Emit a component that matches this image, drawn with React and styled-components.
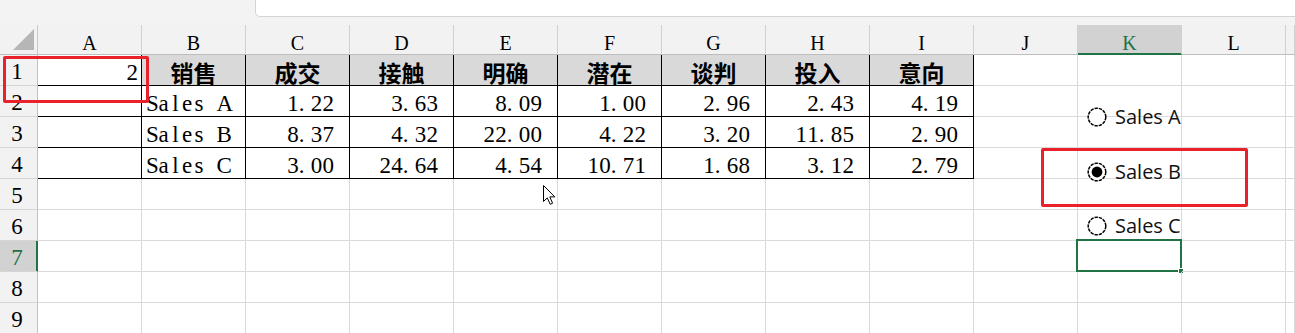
import React from 'react';
import styled, { createGlobalStyle } from 'styled-components';

const GlobalStyle = createGlobalStyle`
  html, body { margin: 0; padding: 0; background: #fff; }
  body { overflow: hidden; }
`;

const GREEN = '#217346';
const COLUMNS = ['A', 'B', 'C', 'D', 'E', 'F', 'G', 'H', 'I', 'J', 'K', 'L', ''];
const FIELDS = ['销售', '成交', '接触', '明确', '潜在', '谈判', '投入', '意向'];
const SALES = [
  ['Sales A', '1.22', '3.63', '8.09', '1.00', '2.96', '2.43', '4.19'],
  ['Sales B', '8.37', '4.32', '22.00', '4.22', '3.20', '11.85', '2.90'],
  ['Sales C', '3.00', '24.64', '4.54', '10.71', '1.68', '3.12', '2.79'],
];
const OPTIONS = ['Sales A', 'Sales B', 'Sales C'];
const PICKED = 2;
const ACTIVE = { row: 7, col: 10 };

const Workbook = styled.div`
  position: relative;
  width: 1295px;
  height: 333px;
  overflow: hidden;
  background: #fff;
  color: #000;
  font-family: "Liberation Serif", "Times New Roman", serif;
`;

const FormulaStrip = styled.div`
  height: 25px;
  box-sizing: border-box;
  padding-left: 255px;
  background: #f3f3f3;
`;

const FormulaBox = styled.div`
  height: 17px;
  box-sizing: border-box;
  background: #fff;
  border-left: 1px solid #d4d4d4;
  border-bottom: 1px solid #d4d4d4;
  border-bottom-left-radius: 5px;
`;

const Grid = styled.div`
  display: grid;
  grid-template-columns: 38px repeat(12, 104px) 1fr;
  grid-template-rows: 30px repeat(9, 31px);
`;

const HeaderBase = styled.div`
  box-sizing: border-box;
  display: flex;
  align-items: flex-end;
  justify-content: center;
  white-space: nowrap;
  background: ${(p) => (p.$selected ? '#d2d2d2' : '#f2f2f2')};
  color: ${(p) => (p.$selected ? GREEN : '#000')};
`;

const Corner = styled(HeaderBase)`
  position: relative;
  border-right: 1px solid #c8c8c8;
  border-bottom: 1px solid #bdbdbd;

  &::after {
    content: '';
    position: absolute;
    right: 3px;
    bottom: 4px;
    width: 0;
    height: 0;
    border-left: 21px solid transparent;
    border-bottom: 21px solid #b6b6b6;
  }
`;

const ColHead = styled(HeaderBase)`
  border-right: 1px solid #d0d0d0;
  border-bottom: 1px solid ${(p) => (p.$selected ? GREEN : '#bdbdbd')};
  box-shadow: ${(p) => (p.$selected ? `inset 0 -1px 0 ${GREEN}` : 'none')};
  font-size: 20px;
  line-height: 22px;
`;

const RowHead = styled(HeaderBase)`
  border-right: 1px solid ${(p) => (p.$selected ? GREEN : '#bfbfbf')};
  border-bottom: 1px solid #d5d5d5;
  box-shadow: ${(p) => (p.$selected ? `inset -1px 0 0 ${GREEN}` : 'none')};
  padding: 0 3px 1px 0;
  font-size: 23px;
  line-height: 24px;
`;

const Cell = styled.div`
  position: relative;
  box-sizing: border-box;
  display: flex;
  align-items: flex-end;
  white-space: nowrap;
  border-right: 1px solid ${(p) => (p.$ruleRight ? '#000' : '#dadada')};
  border-bottom: 1px solid ${(p) => (p.$ruleBottom ? '#000' : '#dadada')};
  font-size: 23px;
  line-height: 24px;
`;

const LabelCell = styled(Cell)`
  justify-content: flex-start;
  padding-left: 4px;
`;

const NumberCell = styled(Cell)`
  justify-content: flex-end;
  padding-right: ${(p) => p.$inset}px;
`;

const FieldCell = styled(Cell)`
  justify-content: center;
  padding-bottom: 1px;
  background: #d9d9d9;
  font-family: "Noto Sans CJK SC", sans-serif;
  font-weight: 700;
  font-size: 23px;
  line-height: 24px;
`;

const ActiveCell = styled(Cell)`
  &::before {
    content: '';
    position: absolute;
    top: -2px;
    left: -2px;
    right: -1px;
    bottom: -1px;
    border: 2px solid ${GREEN};
  }

  &::after {
    content: '';
    position: absolute;
    right: -3px;
    bottom: -3px;
    width: 4px;
    height: 4px;
    background: ${GREEN};
    border: 1px solid #fff;
  }
`;

/* half-width character cells, so Latin text and numbers set like the sheet's CJK font */
const Glyph = styled.span`
  display: inline-block;
  width: 11.75px;
  text-align: ${(p) => (p.$dot ? 'left' : 'center')};
`;

function HalfWidth({ text }) {
  return [...text].map((ch, i) => (
    <Glyph key={i} $dot={ch === '.'}>
      {ch === ' ' ? '\u00a0' : ch}
    </Glyph>
  ));
}

const OptionGroup = styled.div`
  position: absolute;
  left: 1087px;
  top: 107px;
  display: flex;
  flex-direction: column;
  gap: 34.5px;
`;

const Option = styled.div`
  display: flex;
  align-items: center;
  gap: 8px;
  height: 20px;
  font-family: "Open Sans", "Liberation Sans", sans-serif;
  font-size: 20px;
  line-height: 20px;
  color: #111;
`;

const RadioMark = styled.svg`
  flex: none;
  width: 20px;
  height: 20px;
`;

function Radio({ checked }) {
  return (
    <RadioMark viewBox="0 0 20 20">
      <circle cx="10" cy="10" r="8.8" fill="#fff" stroke="#000" strokeWidth="1.5" strokeDasharray="3.4 0.9" />
      {checked && <circle cx="10" cy="10" r="5.4" fill="#000" />}
    </RadioMark>
  );
}

const Callout = styled.div`
  position: absolute;
  left: ${(p) => p.$x}px;
  top: ${(p) => p.$y}px;
  width: ${(p) => p.$w}px;
  height: ${(p) => p.$h}px;
  box-sizing: border-box;
  border: 3px solid #e8212b;
  border-radius: 2px;
  pointer-events: none;
`;

const Pointer = styled.svg`
  position: absolute;
  left: 542px;
  top: 184px;
  width: 14px;
  height: 22px;
`;

function renderCell(row, col) {
  const inTable = row >= 1 && row <= 4 && col <= 8;
  const key = `${row}-${col}`;

  if (row === ACTIVE.row && col === ACTIVE.col) {
    return <ActiveCell key={key} />;
  }
  if (row === 1 && col === 0) {
    return (
      <NumberCell key={key} $inset={3} $ruleRight $ruleBottom>
        <HalfWidth text={String(PICKED)} />
      </NumberCell>
    );
  }
  if (row === 1 && col >= 1 && col <= 8) {
    return (
      <FieldCell key={key} $ruleRight $ruleBottom>
        {FIELDS[col - 1]}
      </FieldCell>
    );
  }
  if (row >= 2 && row <= 4 && col === 1) {
    return (
      <LabelCell key={key} $ruleRight $ruleBottom>
        <HalfWidth text={SALES[row - 2][0]} />
      </LabelCell>
    );
  }
  if (row >= 2 && row <= 4 && col >= 2 && col <= 8) {
    return (
      <NumberCell key={key} $inset={15} $ruleRight $ruleBottom>
        <HalfWidth text={SALES[row - 2][col - 1]} />
      </NumberCell>
    );
  }
  return <Cell key={key} $ruleRight={inTable} $ruleBottom={inTable} />;
}

export default function App() {
  const rows = Array.from({ length: 9 }, (_, i) => i + 1);
  return (
    <>
      <GlobalStyle />
      <Workbook>
        <FormulaStrip>
          <FormulaBox />
        </FormulaStrip>
        <Grid>
          <Corner />
          {COLUMNS.map((c, i) => (
            <ColHead key={`h${i}`} $selected={i === ACTIVE.col}>
              {c}
            </ColHead>
          ))}
          {rows.map((r) => (
            <React.Fragment key={`r${r}`}>
              <RowHead $selected={r === ACTIVE.row}>{r}</RowHead>
              {COLUMNS.map((_, c) => renderCell(r, c))}
            </React.Fragment>
          ))}
        </Grid>

        <OptionGroup>
          {OPTIONS.map((label, i) => (
            <Option key={label}>
              <Radio checked={i + 1 === PICKED} />
              {label}
            </Option>
          ))}
        </OptionGroup>

        <Callout $x={3} $y={56} $w={146} $h={47} />
        <Callout $x={1041} $y={148} $w={207} $h={59} />

        <Pointer viewBox="0 0 14 22">
          <path
            d="M1.5 1.5 L1.5 17.5 L5.3 13.9 L8.2 20.3 L10.6 19.2 L7.8 12.9 L12.8 12.9 Z"
            fill="#fff"
            stroke="#000"
            strokeWidth="1"
            strokeLinejoin="round"
          />
        </Pointer>
      </Workbook>
    </>
  );
}
